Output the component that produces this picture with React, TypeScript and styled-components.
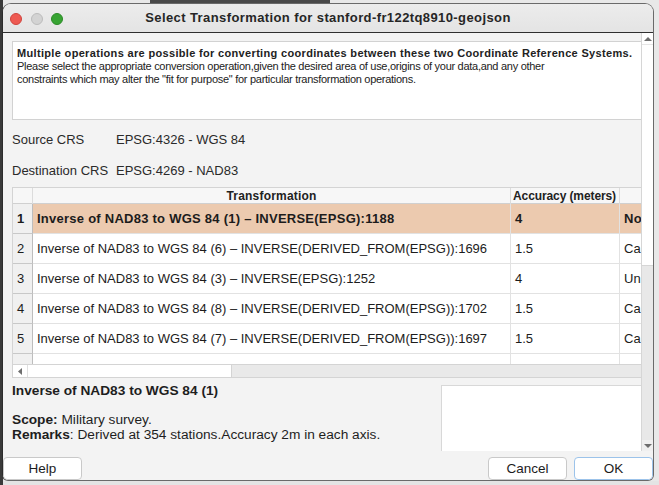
import React from "react";
import styled, { createGlobalStyle } from "styled-components";

const GlobalStyle = createGlobalStyle`
  html, body { margin: 0; padding: 0; width: 659px; height: 485px; overflow: hidden; }
  body {
    font-family: "Liberation Sans", Arial, Helvetica, sans-serif;
    color: #1e1e1e;
    background: #e2e2e2;
  }
  * { box-sizing: border-box; }
`;

const Desktop = styled.div`
  width: 659px;
  height: 485px;
  padding: 3px 0 0 2px;
  background:
    linear-gradient(to right, #3a3a3a 0 3px, transparent 3px),
    linear-gradient(to bottom, transparent 0 481px, #e4e4e4 481px),
    linear-gradient(to right, #e8e8e8 0 150px, #4a4a4a 150px 330px, #e8e8e8 330px);
`;

const Window = styled.div`
  width: 652px;
  height: 478px;
  background: #f3f3f3;
  border: 1px solid #6a6a6a;
  border-left-color: #2c2c2c;
  border-radius: 9px 9px 6px 6px;
  overflow: hidden;
  display: flex;
  flex-direction: column;
`;

const TitleBar = styled.div`
  height: 29px;
  flex: none;
  display: grid;
  grid-template-columns: 1fr auto 1fr;
  align-items: center;
  background: linear-gradient(#ececec, #e4e4e4);
  border-bottom: 1px solid #2f2f2f;
`;

const Lights = styled.div`
  display: flex;
  gap: 8.5px;
  padding-left: 7px;
  padding-top: 1px;
`;

const Light = styled.span<{ $c: string; $b: string }>`
  width: 12px;
  height: 12px;
  border-radius: 50%;
  background: ${(p) => p.$c};
  border: 0.5px solid ${(p) => p.$b};
`;

const Title = styled.div`
  font-weight: bold;
  font-size: 13px;
  letter-spacing: 0.4px;
  color: #262626;
  white-space: nowrap;
  padding-bottom: 1px;
`;

const Main = styled.div`
  flex: 1;
  display: flex;
  min-height: 0;
`;

const Content = styled.div`
  flex: 1;
  min-width: 0;
  overflow: hidden;
  padding: 8px 0 0 9px;
  display: flex;
  flex-direction: column;
`;

const IntroBox = styled.div`
  height: 79px;
  flex: none;
  background: #fff;
  border: 1px solid #d2d2d2;
  border-right: none;
  padding: 5px 4px;
  font-size: 11px;
  line-height: 13px;
  letter-spacing: -0.28px;
  color: #222;
  white-space: nowrap;
`;

const Strong = styled.div`
  font-weight: bold;
  letter-spacing: 0.33px;
`;

const CrsGrid = styled.div`
  margin-top: 4px;
  display: grid;
  grid-template-columns: 104px 1fr;
  grid-auto-rows: 31px;
  align-items: center;
  font-size: 13px;
  color: #2a2a2a;
`;

const TableWrap = styled.div`
  margin-top: 1px;
  height: 177px;
  flex: none;
  border: 1px solid #d4d4d4;
  border-right: none;
  border-bottom: none;
  overflow: hidden;
  background: #fff;
`;

const COLS = "20px 478px 109px 120px";

const HeaderRow = styled.div`
  display: grid;
  grid-template-columns: ${COLS};
  height: 16px;
  background: #f7f7f7;
  border-bottom: 1px solid #d0d0d0;
  font-size: 12px;
  font-weight: bold;
  line-height: 16px;
  color: #222;
`;

const HeadCell = styled.div<{ $center?: boolean; $tight?: boolean }>`
  padding: 0 2px;
  text-align: ${(p) => (p.$center ? "center" : "left")};
  letter-spacing: ${(p) => (p.$tight ? "-0.1px" : "0.2px")};
  border-right: 1px solid #dcdcdc;
  white-space: nowrap;
`;

const Row = styled.div<{ $sel?: boolean }>`
  display: grid;
  grid-template-columns: ${COLS};
  height: 30px;
  font-size: 13px;
  line-height: 29px;
  font-weight: ${(p) => (p.$sel ? "bold" : "normal")};
  letter-spacing: ${(p) => (p.$sel ? "0.25px" : "0")};
  background: ${(p) => (p.$sel ? "#eccaaf" : "#fff")};
  color: #1c1c1c;
`;

const NumCell = styled.div`
  background: #f0f0f0;
  border-right: 1px solid #bdbdbd;
  border-bottom: 1px solid #c8c8c8;
  padding-left: 4px;
`;

const Cell = styled.div`
  border-right: 1px solid #e2e2e2;
  border-bottom: 1px solid #e2e2e2;
  padding-left: 4px;
  white-space: nowrap;
  overflow: hidden;
`;

const HScroll = styled.div`
  height: 14px;
  flex: none;
  display: flex;
  background: #e9e9e9;
  border: 1px solid #d4d4d4;
  border-right: none;
`;

const HArrow = styled.div`
  width: 15px;
  display: flex;
  align-items: center;
  justify-content: center;
  background: #fff;
  border-right: 1px solid #e0e0e0;
`;

const HThumb = styled.div`
  width: 204px;
  background: #fff;
  border-right: 1px solid #d4d4d4;
`;

const Details = styled.div`
  flex: 1;
  display: flex;
  justify-content: space-between;
`;

const DetailText = styled.div`
  padding-top: 5px;
  font-size: 13.7px;
  line-height: 15px;
  color: #1e1e1e;
  white-space: nowrap;
`;

const DetailTitle = styled.div`
  font-weight: bold;
  margin-bottom: 14px;
`;

const NoteBox = styled.div`
  width: 200px;
  margin-top: 7px;
  background: #fff;
  border: 1px solid #d8d8d8;
  border-right: none;
  border-bottom: none;
`;

const VScroll = styled.div`
  width: 12px;
  flex: none;
  display: flex;
  flex-direction: column;
  border-left: 1px solid #d6d6d6;
  background: #e8e8e8;
`;

const VArrow = styled.div`
  height: 11px;
  display: flex;
  align-items: center;
  justify-content: center;
  background: #fff;
`;

const VArrowBottom = styled(VArrow)`
  background: #f0f0f0;
  margin-top: auto;
`;

const VThumb = styled.div`
  height: 222px;
  background: #fff;
  border-top: 1px solid #e6e6e6;
  border-bottom: 1px solid #d6d6d6;
`;

const Buttons = styled.div`
  height: 29px;
  flex: none;
  display: flex;
  align-items: flex-end;
  gap: 7px;
`;

const Button = styled.button<{ $default?: boolean }>`
  width: 79px;
  height: 23px;
  background: #fff;
  border: 1px solid ${(p) => (p.$default ? "#9cc3ea" : "#c9c9c9")};
  border-radius: 4px;
  font-family: "Liberation Sans", Arial, sans-serif;
  font-size: 13.5px;
  color: #1c1c1c;
  padding: 0;
`;

const Spacer = styled.div`
  flex: 1;
`;

const rows = [
  ["Inverse of NAD83 to WGS 84 (1) – INVERSE(EPSG):1188", "4", "No"],
  ["Inverse of NAD83 to WGS 84 (6) – INVERSE(DERIVED_FROM(EPSG)):1696", "1.5", "Ca"],
  ["Inverse of NAD83 to WGS 84 (3) – INVERSE(EPSG):1252", "4", "Un"],
  ["Inverse of NAD83 to WGS 84 (8) – INVERSE(DERIVED_FROM(EPSG)):1702", "1.5", "Ca"],
  ["Inverse of NAD83 to WGS 84 (7) – INVERSE(DERIVED_FROM(EPSG)):1697", "1.5", "Ca"],
  ["", "", ""],
];

export default function App() {
  return (
    <>
      <GlobalStyle />
      <Desktop>
        <Window>
          <TitleBar>
            <Lights>
              <Light $c="#ee5a52" $b="#d0443d" />
              <Light $c="#d3d3d3" $b="#bcbcbc" />
              <Light $c="#38a433" $b="#2b8a27" />
            </Lights>
            <Title>Select Transformation for stanford-fr122tq8910-geojson</Title>
            <div />
          </TitleBar>
          <Main>
            <Content>
              <IntroBox>
                <Strong>
                  Multiple operations are possible for converting coordinates between these two Coordinate Reference Systems.
                </Strong>
                <div>
                  Please select the appropriate conversion operation,given the desired area of use,origins of your data,and any other
                </div>
                <div>
                  constraints which may alter the "fit for purpose" for particular transformation operations.
                </div>
              </IntroBox>
              <CrsGrid>
                <span>Source CRS</span>
                <span>EPSG:4326 - WGS 84</span>
                <span>Destination CRS</span>
                <span>EPSG:4269 - NAD83</span>
              </CrsGrid>
              <TableWrap>
                <HeaderRow>
                  <HeadCell />
                  <HeadCell $center>Transformation</HeadCell>
                  <HeadCell $tight>Accuracy (meters)</HeadCell>
                  <HeadCell />
                </HeaderRow>
                {rows.map((r, i) => (
                  <Row key={i} $sel={i === 0}>
                    <NumCell>{r[0] ? i + 1 : ""}</NumCell>
                    <Cell>{r[0]}</Cell>
                    <Cell>{r[1]}</Cell>
                    <Cell>{r[2]}</Cell>
                  </Row>
                ))}
              </TableWrap>
              <HScroll>
                <HArrow>
                  <svg width="4" height="7" viewBox="0 0 4 7">
                    <path d="M4 0 L0 3.5 L4 7 Z" fill="#6e6e6e" />
                  </svg>
                </HArrow>
                <HThumb />
              </HScroll>
              <Details>
                <DetailText>
                  <DetailTitle>Inverse of NAD83 to WGS 84 (1)</DetailTitle>
                  <div>
                    <b>Scope:</b> Military survey.
                  </div>
                  <div>
                    <b>Remarks</b>: Derived at 354 stations.Accuracy 2m in each axis.
                  </div>
                </DetailText>
                <NoteBox />
              </Details>
            </Content>
            <VScroll>
              <VArrow>
                <svg width="8" height="4" viewBox="0 0 8 4">
                  <path d="M0 4 L4 0 L8 4 Z" fill="#6e6e6e" />
                </svg>
              </VArrow>
              <VThumb />
              <VArrowBottom>
                <svg width="8" height="4" viewBox="0 0 8 4">
                  <path d="M0 0 L4 4 L8 0 Z" fill="#6e6e6e" />
                </svg>
              </VArrowBottom>
            </VScroll>
          </Main>
          <Buttons>
            <Button>Help</Button>
            <Spacer />
            <Button>Cancel</Button>
            <Button $default>OK</Button>
          </Buttons>
        </Window>
      </Desktop>
    </>
  );
}
